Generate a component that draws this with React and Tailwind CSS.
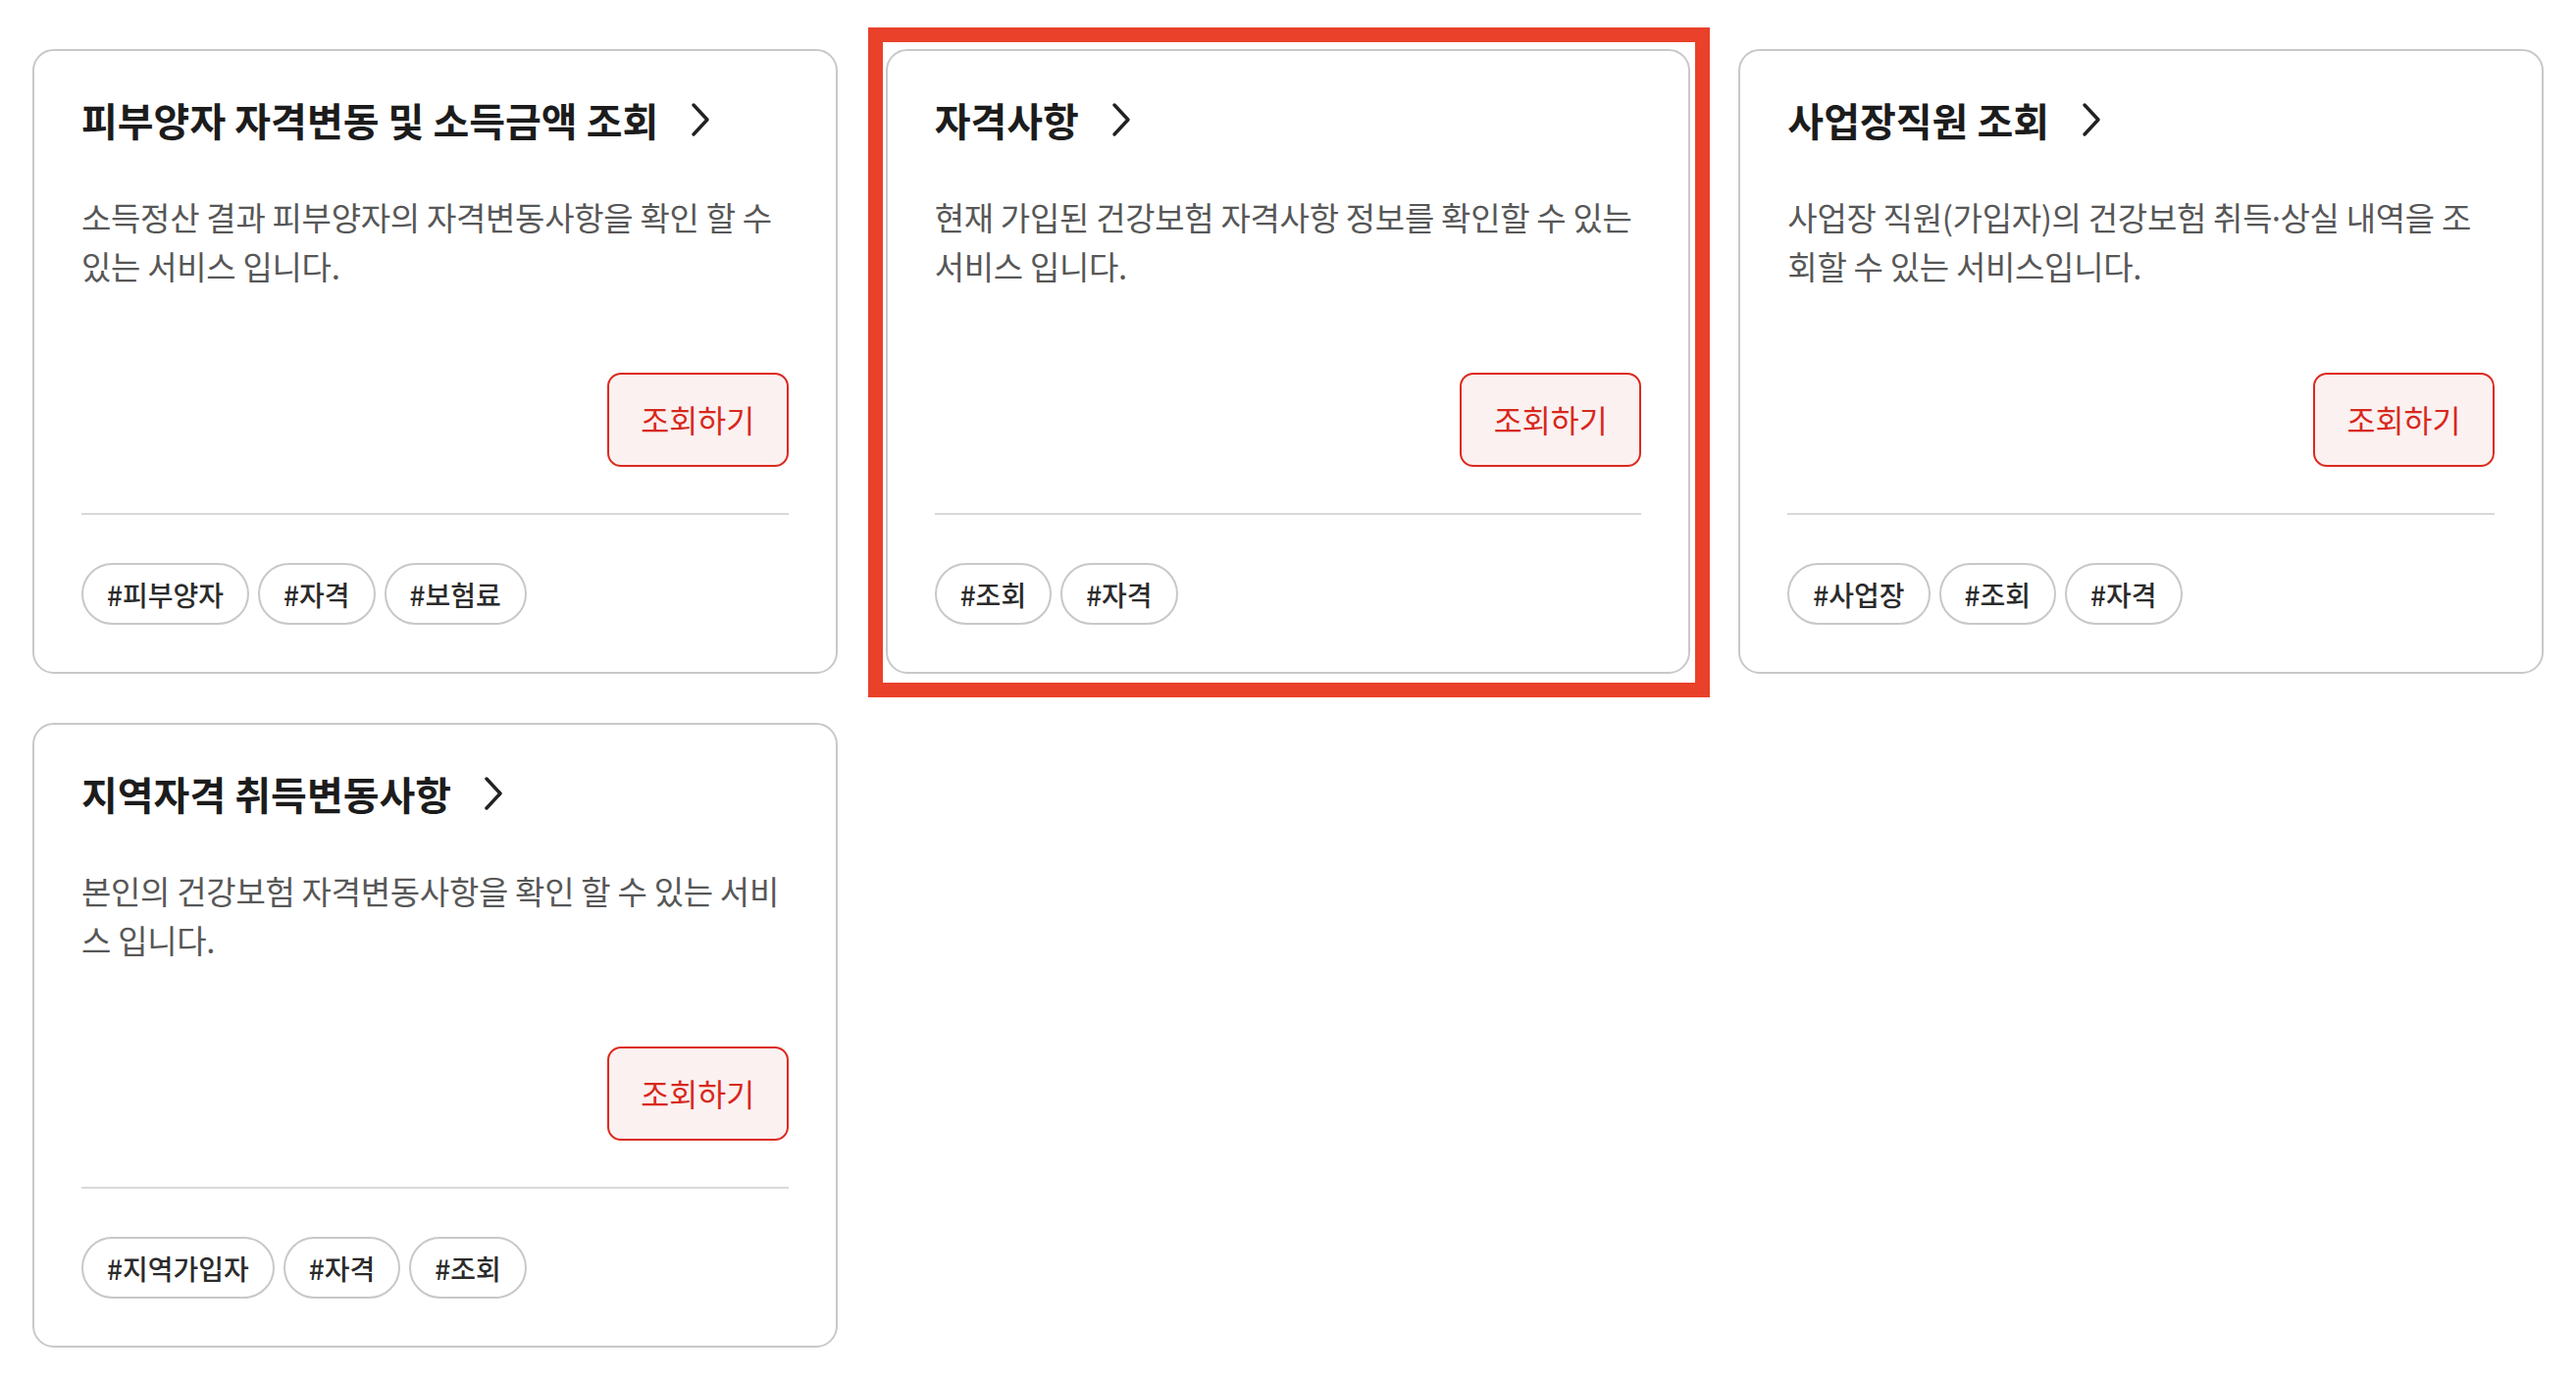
import React from 'react'

const services = [
  {
    title: '피부양자 자격변동 및 소득금액 조회',
    desc: ['소득정산 결과 피부양자의 자격변동사항을 확인 할 수', '있는 서비스 입니다.'],
    tags: ['#피부양자', '#자격', '#보험료'],
  },
  {
    title: '자격사항',
    desc: ['현재 가입된 건강보험 자격사항 정보를 확인할 수 있는', '서비스 입니다.'],
    tags: ['#조회', '#자격'],
    highlighted: true,
  },
  {
    title: '사업장직원 조회',
    desc: [
      <>사업장 직원(가입자)의 건강보험 취득<span className="mx-[-5px]">·</span>상실 내역을 조</>,
      '회할 수 있는 서비스입니다.',
    ],
    tags: ['#사업장', '#조회', '#자격'],
  },
  {
    title: '지역자격 취득변동사항',
    desc: ['본인의 건강보험 자격변동사항을 확인 할 수 있는 서비', '스 입니다.'],
    tags: ['#지역가입자', '#자격', '#조회'],
  },
]

const Chevron = () => (
  <svg width="22" height="36" viewBox="0 0 22 36" fill="none" className="shrink-0">
    <polyline points="4,3 18,18 4,33" stroke="#222" strokeWidth="3.5" strokeLinecap="round" strokeLinejoin="round" />
  </svg>
)

const ServiceCard = ({ item }) => (
  <div className="relative">
    <div className="flex flex-col rounded-[22px] border-2 border-[#c8c8c8] bg-white px-[48px] pt-[48px] pb-[48px]">
      <div className="flex items-center gap-[32px]">
        <h3 className="text-[40px] font-bold leading-[44px] text-[#1c1c1c]">{item.title}</h3>
        <Chevron />
      </div>

      <p className="mt-[52px] text-[33px] leading-[50px] tracking-[-0.3px] text-[#575757]">
        {item.desc.map((line, i) => (
          <span key={i} className="block whitespace-nowrap">{line}</span>
        ))}
      </p>

      <div className="mt-[84px] flex justify-end">
        <button className="h-[96px] w-[185px] rounded-[14px] border-2 border-[#dc2a1e] bg-[#fbf1f1] text-[31.5px] text-[#d8281c]">
          조회하기
        </button>
      </div>

      <div className="mt-[47px] h-[2px] bg-[#d9d9d9]" />

      <div className="mt-[49px] flex gap-[9px]">
        {item.tags.map((tag) => (
          <span
            key={tag}
            className="flex h-[63px] items-center rounded-full border-2 border-[#c8c8c8] px-[24px] text-[28px] font-medium text-[#2b2b2b]"
          >
            {tag}
          </span>
        ))}
      </div>
    </div>

    {/* annotation box around the selected card */}
    {item.highlighted && (
      <div className="pointer-events-none absolute -top-[22px] -right-[20px] -bottom-[24px] -left-[18px] border-[15px] border-[#e9412a]" />
    )}
  </div>
)

export default function App() {
  return (
    <div className="min-h-screen bg-white px-[33px] pt-[50px] pb-[30px]" style={{ fontFamily: '"Noto Sans CJK KR", "Noto Sans", sans-serif' }}>
      <div className="grid grid-cols-3 gap-x-[49px] gap-y-[50px]">
        {services.map((item) => (
          <ServiceCard key={item.title} item={item} />
        ))}
      </div>
    </div>
  )
}
